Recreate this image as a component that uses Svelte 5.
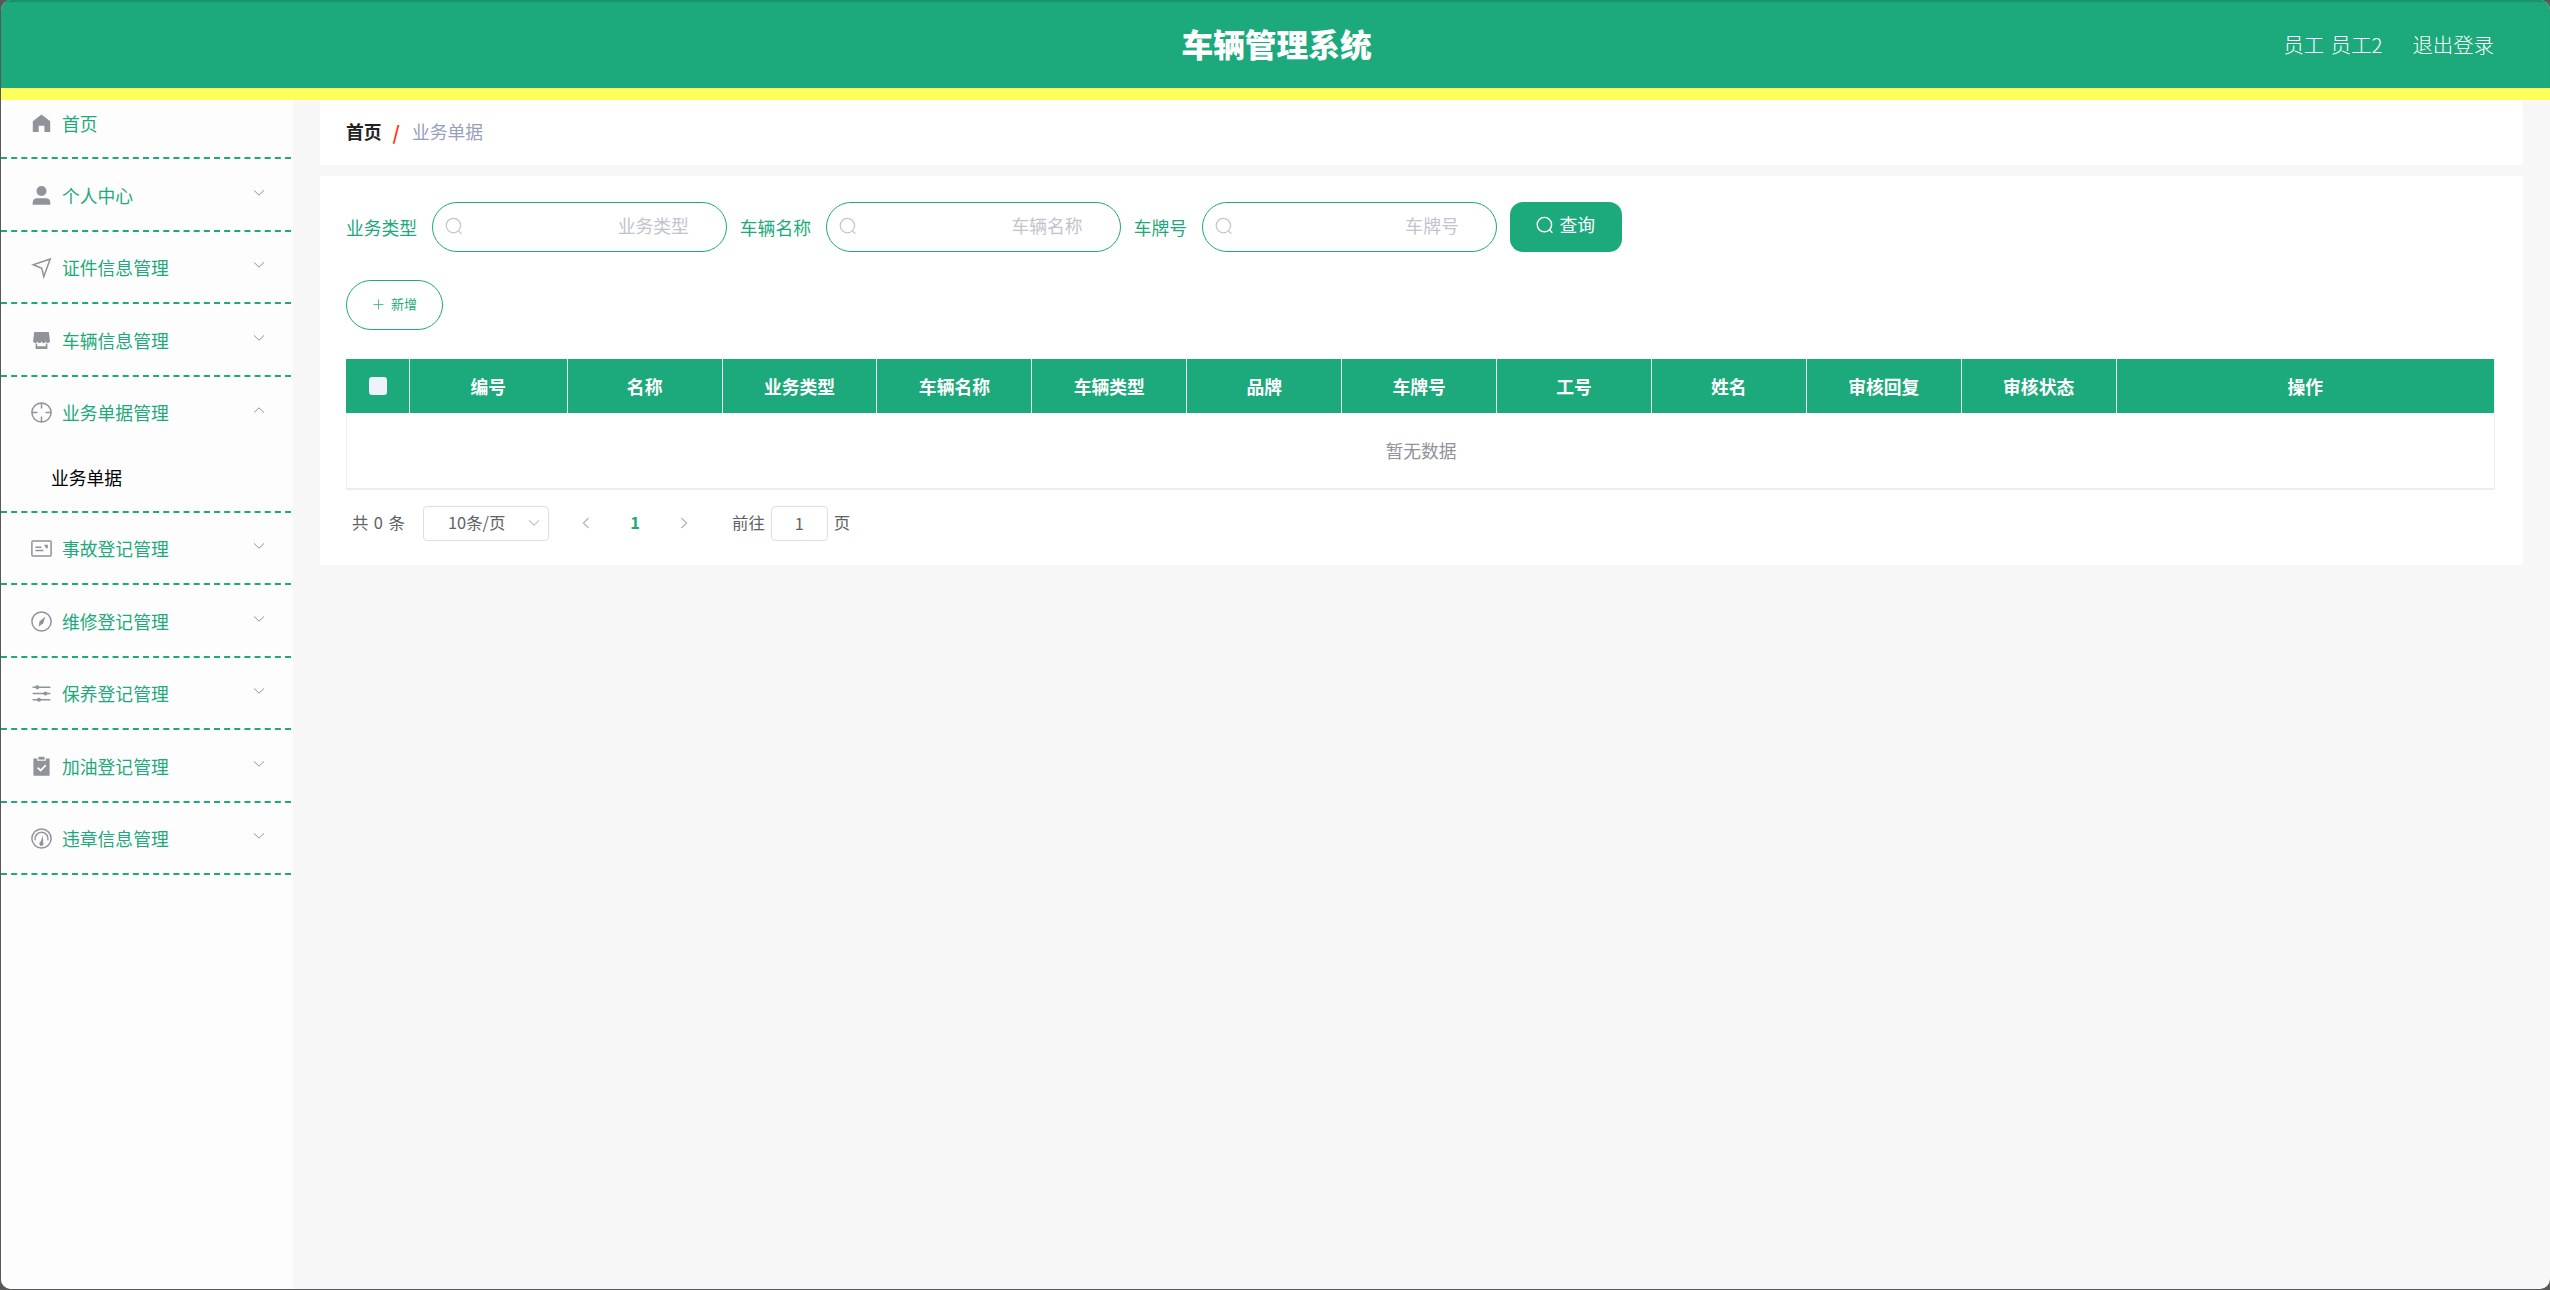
<script lang="ts">
  type MenuItem = {
    name: string;
    icon: string;
    children?: string[];
    link?: boolean;
  };

  const menus: MenuItem[] = [
    { name: "首页", icon: "home", link: true },
    { name: "个人中心", icon: "user" },
    { name: "证件信息管理", icon: "position" },
    { name: "车辆信息管理", icon: "shop" },
    { name: "业务单据管理", icon: "aim", children: ["业务单据"] },
    { name: "事故登记管理", icon: "postcard" },
    { name: "维修登记管理", icon: "compass" },
    { name: "保养登记管理", icon: "operation" },
    { name: "加油登记管理", icon: "claim" },
    { name: "违章信息管理", icon: "odometer" },
  ];

  const filters = ["业务类型", "车辆名称", "车牌号"];

  const columns = [
    "编号",
    "名称",
    "业务类型",
    "车辆名称",
    "车辆类型",
    "品牌",
    "车牌号",
    "工号",
    "姓名",
    "审核回复",
    "审核状态",
    "操作",
  ];

  let opened = $state("业务单据管理");
  let query: string[] = $state(["", "", ""]);
  let page = $state("1");

  function toggle(item: MenuItem) {
    if (item.link) return;
    opened = opened === item.name ? "" : item.name;
  }
</script>

{#snippet searchIcon()}
  <svg class="search-icon" viewBox="0 0 18 18">
    <circle cx="8.4" cy="8.6" r="7.2" />
    <path d="M13.4 13.8l3 3" />
  </svg>
{/snippet}

{#snippet menuIcon(name: string)}
  <svg class="menu-icon" viewBox="0 0 23 23">
    {#if name === "home"}
      <path class="fill" d="M11.5 2.6L20.2 9.3v10.6h-5.8v-6.2H8.7v6.2H2.8V9.3z" />
    {:else if name === "user"}
      <circle class="fill" cx="11.5" cy="7" r="5" />
      <path class="fill" d="M2.7 20.8v-2.2c0-2.8 1.8-4.3 4.4-4.3h8.8c2.6 0 4.4 1.5 4.4 4.3v2.2z" />
    {:else if name === "position"}
      <path d="M20.2 3L3.2 8.8l8.6 3.4 2 8.4z" />
    {:else if name === "shop"}
      <path class="fill" d="M4.2 3h14.6l1.2 9c0 1-.8 1.9-2 1.9s-2-.7-2.2-1.5c-.2.8-1 1.5-2.1 1.5s-2-.7-2.2-1.5c-.2.8-1 1.5-2.1 1.5s-2-.7-2.2-1.5c-.2.8-1 1.5-2.1 1.5-1.2 0-2-.9-2-1.9z" />
      <path class="fill" d="M5.6 14.6h1.6v2.6h8.6v-2.6h1.6v5.3H5.6z" />
    {:else if name === "aim"}
      <circle cx="11.5" cy="11.5" r="9.6" />
      <path d="M11.5 2v5.4M11.5 15.6V21M2 11.5h5.4M15.6 11.5H21" />
    {:else if name === "postcard"}
      <rect x="1.9" y="3.9" width="19.2" height="15" rx="1" />
      <path d="M5.4 10.2h6M5.4 13.4h8" />
      <path class="fill" d="M14.2 7.7h3.6v3.6h-1.8z" />
    {:else if name === "compass"}
      <circle cx="11.5" cy="11.5" r="9.6" />
      <path class="fill" d="M15.4 6.4l-2.2 6.8-4.6 3.6 1-5.6z" />
    {:else if name === "operation"}
      <path d="M2.6 5.2h17.8M2.6 11.5h17.8M2.6 17.8h17.8" />
      <circle class="fill" cx="7.3" cy="5.2" r="2" />
      <circle class="fill" cx="15.4" cy="11.5" r="2" />
      <circle class="fill" cx="9" cy="17.8" r="2" />
    {:else if name === "claim"}
      <path class="fill" d="M3.4 3.4h3.8v2.4h8.6V3.4h3.8v17.4H3.4z" />
      <path class="fill" d="M8.4 1.8h6.2v2.8H8.4z" />
      <path class="tick" d="M7.6 12.6l3 2.9 5.2-5.4" />
    {:else}
      <circle cx="11.5" cy="11.5" r="9.6" />
      <path d="M5.2 13.4a6.5 6.5 0 1 1 12.6 0" />
      <path class="fill" d="M13 8.6l.1 6.8a2.1 2.1 0 1 1-2.6-.6z" />
    {/if}
  </svg>
{/snippet}

<div class="window">
  <header>
    <h1>车辆管理系统</h1>
    <div class="account">
      <span>员工 员工2</span>
      <a href="#logout">退出登录</a>
    </div>
  </header>

  <div class="body">
    <nav>
      {#each menus as item}
        <div class="group" class:link={item.link}>
          <button class="menu-title" onclick={() => toggle(item)}>
            {@render menuIcon(item.icon)}
            <span>{item.name}</span>
            {#if !item.link}
              <svg class="arrow" class:up={item.children && opened === item.name} viewBox="0 0 12 8">
                <path d="M1 1.4l5 4.8 5-4.8" />
              </svg>
            {/if}
          </button>
          {#if item.children && opened === item.name}
            {#each item.children as child}
              <div class="sub-item">{child}</div>
            {/each}
          {/if}
        </div>
      {/each}
    </nav>

    <main>
      <div class="breadcrumb">
        <b>首页</b>
        <i>/</i>
        <span>业务单据</span>
      </div>

      <section>
        <div class="search">
          {#each filters as label, i}
            <label>
              <span>{label}</span>
              <div class="field">
                {@render searchIcon()}
                <input type="text" placeholder={label} bind:value={query[i]} />
              </div>
            </label>
          {/each}
          <button class="query">
            {@render searchIcon()}
            <span>查询</span>
          </button>
        </div>

        <button class="add">
          <svg viewBox="0 0 12 12"><path d="M6 .5v11M.5 6h11" /></svg>
          <span>新增</span>
        </button>

        <table>
          <thead>
            <tr>
              <th class="check"><span class="checkbox"></span></th>
              {#each columns as column, i}
                <th class:first={i === 0} class:last={i === columns.length - 1}>{column}</th>
              {/each}
            </tr>
          </thead>
          <tbody>
            <tr>
              <td colspan={columns.length + 1}>暂无数据</td>
            </tr>
          </tbody>
        </table>

        <div class="pagination">
          <span class="total">共 0 条</span>
          <div class="sizes">
            <span>10条/页</span>
            <svg viewBox="0 0 12 8"><path d="M1 1.4l5 4.8 5-4.8" /></svg>
          </div>
          <svg class="step prev" viewBox="0 0 8 12"><path d="M6.6 1L1.4 6l5.2 5" /></svg>
          <b>1</b>
          <svg class="step next" viewBox="0 0 8 12"><path d="M1.4 1l5.2 5-5.2 5" /></svg>
          <span>前往</span>
          <input type="text" bind:value={page} />
          <span>页</span>
        </div>
      </section>
    </main>
  </div>
</div>

<style>
  :global(body) {
    background: #58585a;
    overflow: hidden;
  }

  .window {
    --green: #1ca97b;
    box-sizing: border-box;
    height: 1289px;
    margin-left: 1px;
    display: flex;
    flex-direction: column;
    background: #f7f7f7;
    border-radius: 10px;
    overflow: hidden;
    font-family: "Noto Sans CJK SC", sans-serif;
    font-size: 17.8px;
    font-weight: 400;
    line-height: 1.2;
  }

  button,
  input {
    box-sizing: border-box;
    font: inherit;
    margin: 0;
    padding: 0;
    border: none;
    background: none;
    outline: none;
  }

  svg {
    fill: none;
    stroke: currentColor;
    stroke-width: 1.2;
    flex-shrink: 0;
  }

  /* top bar */
  header {
    height: 88px;
    flex-shrink: 0;
    display: grid;
    grid-template-columns: 1fr auto 1fr;
    align-items: center;
    background: var(--green);
    border-bottom: 12px solid #ffff5c;
    box-shadow: inset 0 2px 1px #189268;
    color: #fff;
  }

  h1 {
    grid-column: 2;
    margin: 0 0 1px 2px;
    font-size: 31.7px;
    font-weight: 900;
  }

  .account {
    display: flex;
    justify-content: flex-end;
    gap: 30px;
    padding: 1px 56px 0 0;
    font-size: 20.4px;
    font-weight: 300;
    word-spacing: 2px;
  }

  .account a {
    color: inherit;
    text-decoration: none;
  }

  .body {
    flex: 1;
    display: flex;
  }

  /* side menu */
  nav {
    width: 292px;
    flex-shrink: 0;
    background: #fdfdfd;
  }

  .group {
    width: 290px;
    border-bottom: 2px dashed var(--green);
  }

  .menu-title {
    width: 100%;
    height: 70.5px;
    display: flex;
    align-items: center;
    padding: 2px 26px 0 29px;
    color: var(--green);
    cursor: pointer;
  }

  .link .menu-title {
    height: 57px;
    padding-top: 0;
    padding-bottom: 10px;
  }

  .menu-title span {
    margin-left: 9px;
  }

  .menu-icon {
    width: 23px;
    height: 23px;
    color: #909399;
    stroke-width: 1.5;
  }

  .fill {
    fill: currentColor;
    stroke: none;
  }

  .tick {
    stroke: #fff;
    stroke-width: 1.8;
  }

  .arrow {
    width: 12px;
    height: 8px;
    margin: 0 0 5px auto;
    color: #909399;
    stroke-width: 1;
  }

  .arrow.up {
    transform: rotate(180deg);
  }

  .sub-item {
    height: 63.5px;
    box-sizing: border-box;
    display: flex;
    align-items: center;
    padding: 0 0 2px 50px;
    color: #000;
  }

  /* content */
  main {
    flex: 1;
    padding: 0 28px 0 27px;
  }

  .breadcrumb {
    height: 65px;
    box-sizing: border-box;
    display: flex;
    align-items: center;
    padding: 0 0 1px 26px;
    background: #fff;
    color: #97a0be;
  }

  .breadcrumb b {
    color: #222;
    font-weight: 700;
  }

  .breadcrumb i {
    margin: 0 12px 0 11px;
    color: #f5401b;
    font-size: 19px;
    font-style: normal;
    font-weight: 700;
  }

  section {
    height: 389px;
    box-sizing: border-box;
    margin-top: 11px;
    padding: 26px 28px 0 26px;
    background: #fff;
  }

  .search {
    display: flex;
    align-items: center;
  }

  label {
    display: flex;
    align-items: center;
    margin-right: 13px;
    color: var(--green);
  }

  label > span {
    margin-right: 14.7px;
    padding-top: 1px;
  }

  .field {
    box-sizing: border-box;
    width: 295px;
    height: 50px;
    display: flex;
    align-items: center;
    padding: 0 37px 3px 12px;
    border: 1px solid var(--green);
    border-radius: 25px;
  }

  .field input {
    flex: 1;
    min-width: 0;
    text-align: right;
    color: #606266;
  }

  .field input::placeholder {
    color: #c0c4cc;
    opacity: 1;
  }

  .search-icon {
    width: 18px;
    height: 18px;
    color: #c0c4cc;
  }

  .query {
    width: 112px;
    height: 50px;
    display: flex;
    align-items: center;
    justify-content: center;
    gap: 5px;
    padding-bottom: 4px;
    border-radius: 13px;
    background: var(--green);
    color: #fff;
  }

  .query .search-icon {
    color: #fff;
    stroke-width: 1.4;
  }

  .add {
    width: 97px;
    height: 50px;
    display: flex;
    align-items: center;
    justify-content: center;
    gap: 7px;
    margin: 28px 0 29px;
    padding: 0 0 2px 1px;
    border: 1px solid var(--green);
    border-radius: 25px;
    color: var(--green);
    font-size: 13px;
  }

  .add svg {
    width: 11px;
    height: 11px;
    stroke-width: 0.8;
  }

  /* table */
  table {
    width: 2149px;
    table-layout: fixed;
    border-collapse: separate;
    border-spacing: 0;
    border: 1px solid #ededf0;
    border-width: 0 1px 2px 0;
  }

  th {
    box-sizing: border-box;
    width: 154.9px;
    height: 54px;
    padding: 1px 0 0;
    border-right: 1px solid #ebeef5;
    background: var(--green);
    color: #fff;
    font-weight: 700;
    text-align: center;
  }

  th.check {
    width: 64px;
    padding: 0;
    line-height: 0;
  }

  th.first {
    width: 157.7px;
  }

  th.last {
    width: auto;
    border-right: none;
  }

  .checkbox {
    display: inline-block;
    width: 18px;
    height: 18px;
    border-radius: 3px;
    background: #edf2fc;
    vertical-align: middle;
  }

  td {
    height: 75px;
    padding: 1px 0 0 1px;
    box-sizing: border-box;
    border-left: 1px solid #ededf0;
    color: #909399;
    text-align: center;
  }

  /* pagination */
  .pagination {
    display: flex;
    align-items: center;
    height: 36px;
    margin-top: 15px;
    padding-left: 6px;
    color: #606266;
    font-size: 16.4px;
  }

  .total {
    width: 71px;
    word-spacing: 1.8px;
  }

  .sizes {
    box-sizing: border-box;
    width: 126px;
    height: 35px;
    display: flex;
    align-items: center;
    justify-content: space-between;
    padding: 0 8px 0 24px;
    border: 1px solid #dcdfe6;
    border-radius: 4px;
  }

  .sizes svg {
    width: 12px;
    height: 8px;
    color: #c0c4cc;
  }

  .step {
    width: 8px;
    height: 12px;
    color: #b4b7bd;
    stroke-width: 1.3;
  }

  .prev {
    margin-left: 33px;
  }

  .next {
    margin-right: 44px;
  }

  .pagination b {
    width: 90px;
    text-align: center;
    color: var(--green);
    font-weight: 700;
  }

  .pagination input {
    width: 57px;
    height: 35px;
    margin: 0 6px;
    border: 1px solid #dcdfe6;
    border-radius: 4px;
    color: #606266;
    text-align: center;
  }
</style>
